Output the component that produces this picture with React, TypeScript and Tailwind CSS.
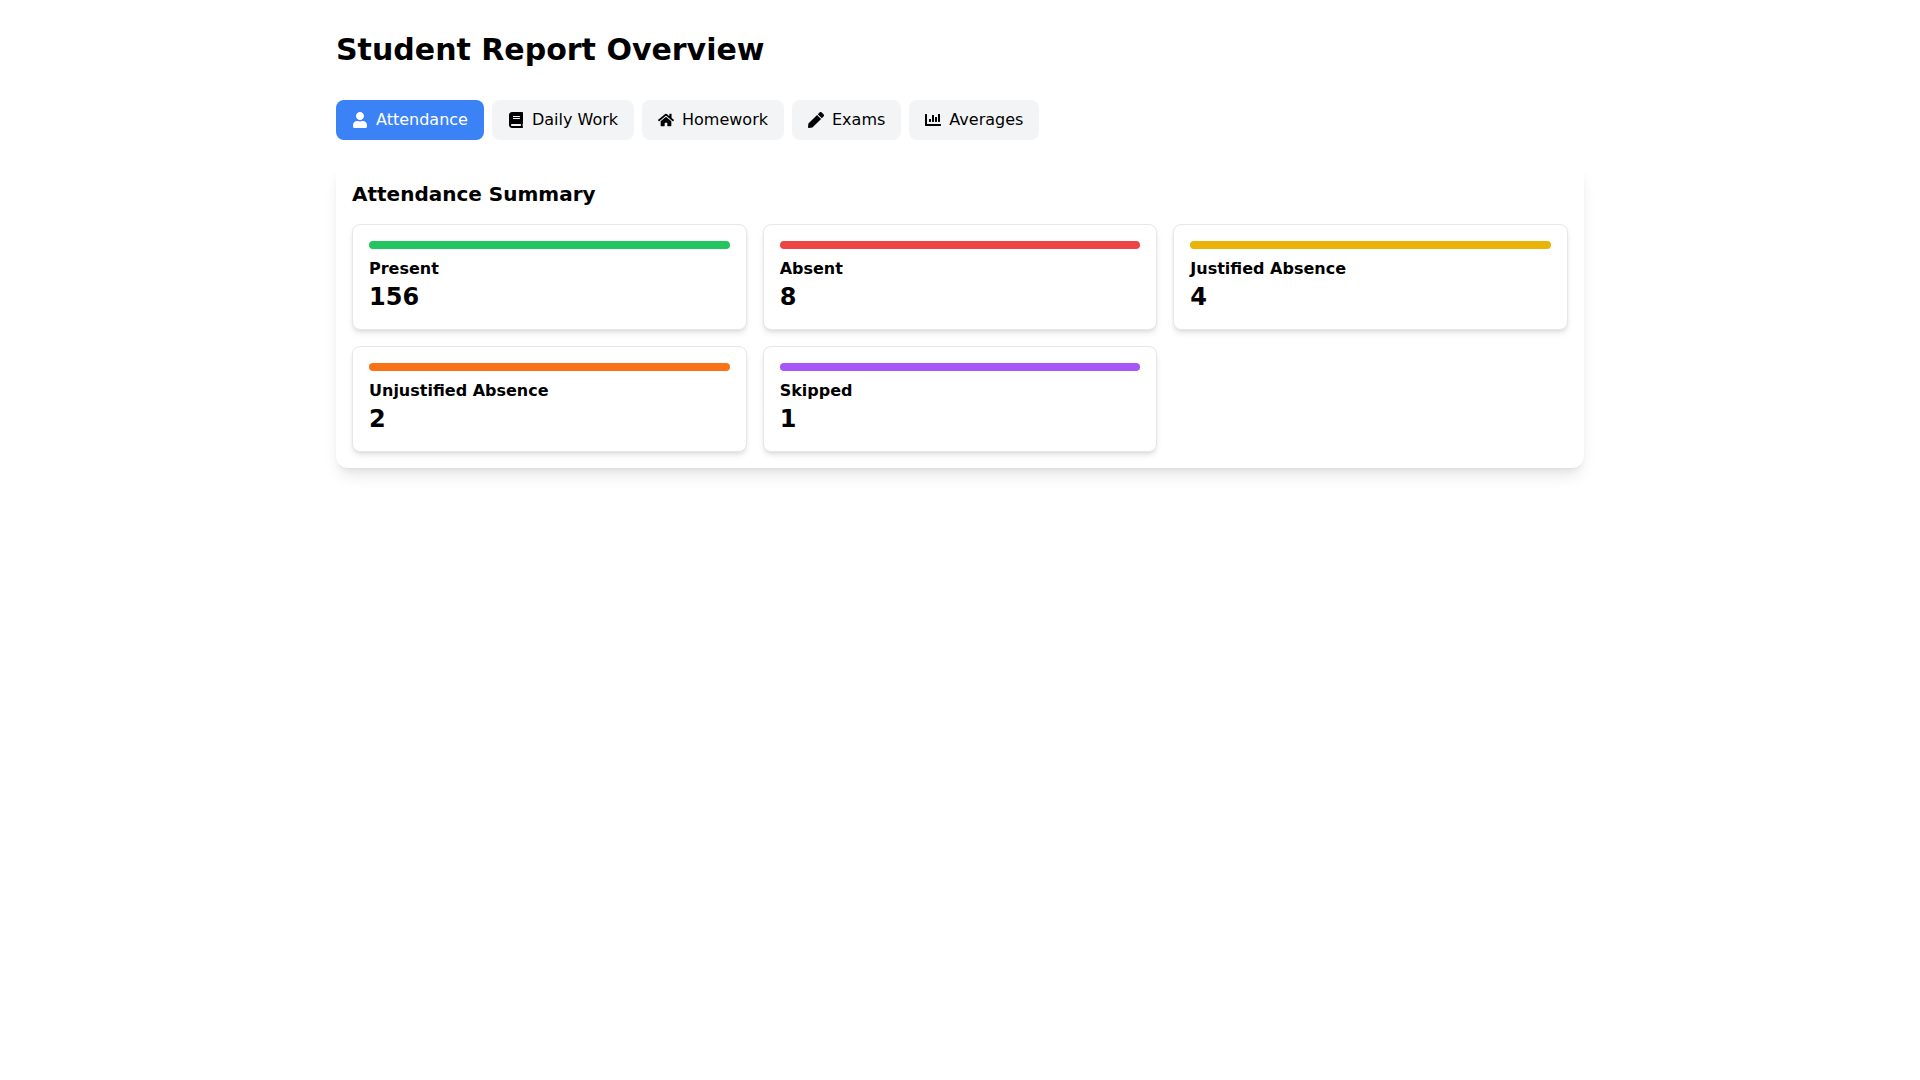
import { useState } from 'react';
import { FaUser, FaBook, FaHome, FaPen, FaChartBar } from 'react-icons/fa';

const tabs = [
  { label: 'Attendance', icon: FaUser },
  { label: 'Daily Work', icon: FaBook },
  { label: 'Homework', icon: FaHome },
  { label: 'Exams', icon: FaPen },
  { label: 'Averages', icon: FaChartBar },
];

const stats = [
  { label: 'Present', value: 156, bar: 'bg-[#22c55e]' },
  { label: 'Absent', value: 8, bar: 'bg-[#ef4444]' },
  { label: 'Justified Absence', value: 4, bar: 'bg-[#eab308]' },
  { label: 'Unjustified Absence', value: 2, bar: 'bg-[#f97316]' },
  { label: 'Skipped', value: 1, bar: 'bg-[#a855f7]' },
];

export default function App() {
  const [active, setActive] = useState('Attendance');
  return (
    <main className="mx-auto max-w-7xl px-4 py-8 font-['DejaVu_Sans',sans-serif] text-black">
      <h1 className="mb-8 text-3xl font-bold">Student Report Overview</h1>
      <nav className="mb-6 flex gap-2">
        {tabs.map(({ label, icon: Icon }) => (
          <button
            key={label}
            onClick={() => setActive(label)}
            className={`flex items-center rounded-lg px-4 py-2 ${
              active === label ? 'bg-[#3b82f6] text-white' : 'bg-[#f3f4f6] text-black'
            }`}
          >
            <Icon className="mr-2" />
            {label}
          </button>
        ))}
      </nav>
      <section className="rounded-xl bg-white p-4 shadow-lg">
        <h2 className="mb-4 text-xl font-bold">Attendance Summary</h2>
        <div className="grid grid-cols-3 gap-4">
          {stats.map(({ label, value, bar }) => (
            <div key={label} className="rounded-lg border border-[#e5e7eb] bg-white p-4 shadow-md">
              <div className={`mb-2 h-2 w-full rounded ${bar}`} />
              <h3 className="font-semibold">{label}</h3>
              <p className="text-2xl font-bold">{value}</p>
            </div>
          ))}
        </div>
      </section>
    </main>
  );
}
